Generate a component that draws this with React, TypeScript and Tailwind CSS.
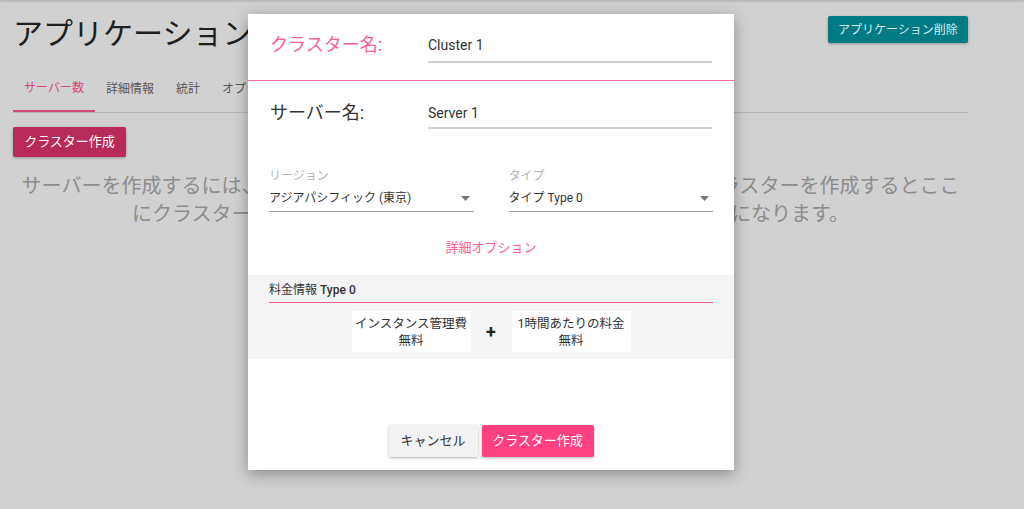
import React from "react";

const font = { fontFamily: "Roboto, 'Noto Sans CJK JP', sans-serif" };

function Arrow() {
    return (
        <svg width="9" height="5" viewBox="0 0 9 5" className="shrink-0">
            <polygon points="0,0 9,0 4.5,5" fill="#757575" />
        </svg>
    );
}

function SelectBox({ label, value }: { label: string; value: React.ReactNode }) {
    return (
        <div>
            <div className="text-[12px] leading-[18px] text-[#b4b4b4]">{label}</div>
            <div className="mt-[3px] flex items-center justify-between pb-[3px] border-b border-[#9e9e9e] pr-[4px]">
                <span className="text-[12px] leading-[20px] text-[#333]">{value}</span>
                <Arrow />
            </div>
        </div>
    );
}

export default function App() {
    const tabs = ["サーバー数", "詳細情報", "統計", "オプション", "設定"];

    return (
        <div
            className="relative w-full h-[509px] overflow-hidden bg-[#d1d1d1] shadow-[inset_0_3px_3px_-2px_rgba(0,0,0,0.18)]"
            style={font}
        >
            {/* 背景ページ */}
            <div className="pl-[13px] pr-[56px]">
                <div className="flex items-start justify-between pt-[16px]">
                    <h1 className="text-[30px] leading-[36px] text-[#1e1e1e]">アプリケーション</h1>
                    <button className="h-[27px] w-[140px] bg-[#007b84] text-[#d9e9eb] text-[12px] rounded-[2px] shadow-[0_1px_3px_rgba(0,0,0,0.3)]">
                        アプリケーション削除
                    </button>
                </div>

                <div className="mt-[14px] flex border-b border-[#b6b6b6]">
                    {tabs.map((t, i) => (
                        <div
                            key={t}
                            className={
                                i === 0
                                    ? "h-[46px] px-[11px] flex items-center text-[12px] text-[#d2497a] border-b-2 border-[#d2497a]"
                                    : "h-[46px] px-[11px] flex items-center text-[12px] text-[#575757]"
                            }
                        >
                            {t}
                        </div>
                    ))}
                </div>

                <button className="mt-[14px] h-[30px] w-[113px] bg-[#b82a5a] text-white text-[13px] rounded-[2px] shadow-[0_1px_3px_rgba(0,0,0,0.3)]">
                    クラスター作成
                </button>

                <p className="mt-[15px] text-center text-[20px] leading-[28px] text-[#8c8c8c]">
                    サーバーを作成するには、まずボタンからクラスターを作成してください。クラスターを作成するとここ
                    <br />
                    にクラスターが一覧表示され、その中にサーバーを追加できるようになります。
                </p>
            </div>

            {/* ダイアログ */}
            <div className="absolute left-[248px] top-[14px] w-[486px] h-[456px] bg-white shadow-[0_4px_14px_rgba(0,0,0,0.35)]">
                <div className="h-[67px] flex items-start pt-[21px] px-[22px] border-b border-[#ff6b9b]">
                    <div className="w-[158px] text-[18px] leading-[20px] text-[#ff5c93]">クラスター名:</div>
                    <div className="flex-1 text-[14px] leading-[20px] text-[#333] pb-[6px] border-b-2 border-[#d0d0d0]">
                        Cluster 1
                    </div>
                </div>

                <div className="h-[64px] flex items-start pt-[22px] px-[22px]">
                    <div className="w-[158px] text-[18px] leading-[20px] text-[#333]">サーバー名:</div>
                    <div className="flex-1 text-[14px] leading-[20px] text-[#333] pb-[4px] border-b-2 border-[#d0d0d0]">
                        Server 1
                    </div>
                </div>

                <div className="pt-[22px] px-[21px] grid grid-cols-2 gap-[35px]">
                    <SelectBox label="リージョン" value="アジアパシフィック (東京)" />
                    <SelectBox label="タイプ" value="タイプ Type 0" />
                </div>

                <div className="mt-[26px] text-center text-[13px] leading-[20px] text-[#ff5c93]">詳細オプション</div>

                <div className="mt-[17px] h-[84px] bg-[#f4f4f4] pt-[7px] px-[21px]">
                    <div className="text-[12px] leading-[16px] text-[#333] pb-[4px] border-b border-[#f06292]">
                        料金情報 <span className="font-medium">Type 0</span>
                    </div>
                    <div className="mt-[8px] flex items-center justify-center">
                        <div className="w-[119px] h-[41px] bg-white flex flex-col items-center justify-center text-[12.5px] leading-[17px] text-[#333]">
                            <span>インスタンス管理費</span>
                            <span>無料</span>
                        </div>
                        <div className="w-[41px] text-center text-[18px] font-bold text-[#222]">+</div>
                        <div className="w-[119px] h-[41px] bg-white flex flex-col items-center justify-center text-[12.5px] leading-[17px] text-[#333]">
                            <span>1時間あたりの料金</span>
                            <span>無料</span>
                        </div>
                    </div>
                </div>

                <div className="mt-[66px] flex justify-center gap-[4px]">
                    <button className="h-[32px] w-[89px] bg-[#f2f2f2] text-[13px] text-[#333] rounded-[2px] shadow-[0_1px_3px_rgba(0,0,0,0.3)]">
                        キャンセル
                    </button>
                    <button className="h-[32px] w-[112px] bg-[#ff4081] text-[13px] text-white rounded-[2px] shadow-[0_1px_3px_rgba(0,0,0,0.3)]">
                        クラスター作成
                    </button>
                </div>
            </div>
        </div>
    );
}
